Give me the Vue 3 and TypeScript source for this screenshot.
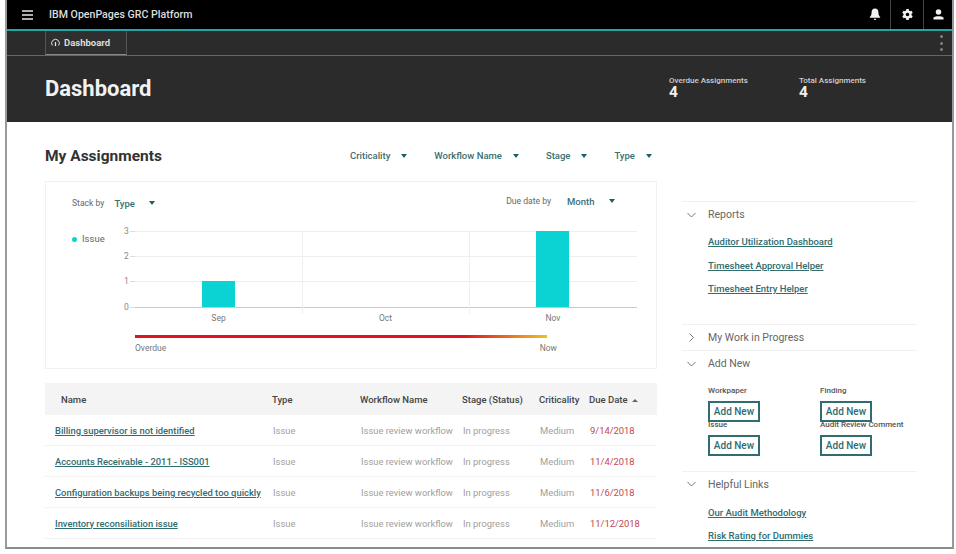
<script setup lang="ts">
interface Row { name: string; date: string }
const rows: Row[] = [
  { name: 'Billing supervisor is not identified', date: '9/14/2018' },
  { name: 'Accounts Receivable - 2011 - ISS001', date: '11/4/2018' },
  { name: 'Configuration backups being recycled too quickly', date: '11/6/2018' },
  { name: 'Inventory reconsiliation issue', date: '11/12/2018' },
]
const filters = ['Criticality', 'Workflow Name', 'Stage', 'Type']
const reports = ['Auditor Utilization Dashboard', 'Timesheet Approval Helper', 'Timesheet Entry Helper']
const addNew = ['Workpaper', 'Finding', 'Issue', 'Audit Review Comment']
const helpful = ['Our Audit Methodology', 'Risk Rating for Dummies']
</script>

<template>
  <div class="frame">
    <div class="screen">
      <header class="topbar">
        <svg class="burger" width="11" height="10" viewBox="0 0 11 10"><path d="M0 1h11M0 5h11M0 9h11" stroke="#e8e8e8" stroke-width="1.300" /></svg>
        <span class="brand">IBM OpenPages GRC Platform</span>
        <div class="actions">
          <div class="act act-bell">
            <svg width="12" height="13" viewBox="0 0 12 13"><path d="M6 0.500C3.800 0.500 2.600 2.200 2.600 4.200c0 2.600-.7 3.600-1.800 4.800v.8h10.400V9c-1.100-1.200-1.800-2.200-1.800-4.800C9.400 2.200 8.200 0.500 6 0.500zM4.700 10.800a1.300 1.300 0 0 0 2.600 0z" fill="#f2f2f2" /></svg>
          </div>
          <div class="act act-gear">
            <svg width="11" height="11" viewBox="0 0 12 12"><path fill-rule="evenodd" d="M4.700 0h2.600l.3 1.700 1.200.7 1.600-.6 1.300 2.300-1.300 1.100v1.600l1.300 1.100-1.300 2.300-1.600-.6-1.200.7L7.300 12H4.700l-.3-1.700-1.200-.7-1.600.6L.3 7.900l1.300-1.100V5.200L.3 4.100l1.300-2.300 1.600.6 1.200-.7zM6 4a2 2 0 1 0 0 4 2 2 0 0 0 0-4z" fill="#f2f2f2" /></svg>
          </div>
          <div class="act act-user">
            <svg width="11" height="11" viewBox="0 0 12 12"><circle cx="6" cy="3.400" r="3" fill="#f2f2f2" /><path d="M0.500 9.300c1-1 3.300-1.500 5.500-1.500s4.500.5 5.500 1.500V11.500H0.500z" fill="#f2f2f2" /></svg>
          </div>
        </div>
      </header>

      <nav class="tabbar">
        <div class="tab">
          <svg width="9" height="9" viewBox="0 0 10 10"><path d="M1.500 8.300A4.300 4.300 0 1 1 8.500 8.300" fill="none" stroke="#e6e6e6" stroke-width="1.100" /><path d="M5 4.500V9" stroke="#e6e6e6" stroke-width="1.400" /></svg>
          <span>Dashboard</span>
        </div>
        <div class="kebab"><i></i><i></i><i></i></div>
      </nav>

      <section class="hero">
        <h1>Dashboard</h1>
        <div class="stats">
          <div class="stat"><span>Overdue Assignments</span><b>4</b></div>
          <div class="stat"><span>Total Assignments</span><b>4</b></div>
        </div>
      </section>

      <main class="content">
        <div class="left">
          <div class="title-row">
            <h2>My Assignments</h2>
            <div class="filters">
              <div v-for="f in filters" :key="f" class="drop">{{ f }}<i class="caret"></i></div>
            </div>
          </div>

          <div class="chart-card">
            <div class="chart-head">
              <div class="by"><span class="by-l">Stack by</span><span class="drop">Type<i class="caret caret-w"></i></span></div>
              <div class="by by-r"><span class="by-l">Due date by</span><span class="drop">Month<i class="caret caret-w"></i></span></div>
            </div>
            <div class="chart-body">
              <div class="legend"><i class="dot"></i>Issue</div>
              <div class="plot-wrap">
                <div class="plot">
                  <div class="yrow"><span>3</span></div>
                  <div class="yrow"><span>2</span></div>
                  <div class="yrow tall"><span>1</span></div>
                  <div class="yrow last"><span>0</span></div>
                  <div class="vline v1"></div>
                  <div class="vline v2"></div>
                  <div class="bar b1"></div>
                  <div class="bar b2"></div>
                </div>
                <div class="xlabels"><span>Sep</span><span>Oct</span><span>Nov</span></div>
                <div class="timeline"></div>
                <div class="tl-labels"><span>Overdue</span><span>Now</span></div>
              </div>
            </div>
          </div>

          <div class="table">
            <div class="tr th">
              <div class="c-name th-name">Name</div>
              <div class="c-type">Type</div>
              <div class="c-wf">Workflow Name</div>
              <div class="c-stage">Stage (Status)</div>
              <div class="c-crit">Criticality</div>
              <div class="c-date">Due Date <i class="sort"></i></div>
            </div>
            <div v-for="r in rows" :key="r.name" class="tr td">
              <div class="c-name"><a>{{ r.name }}</a></div>
              <div class="c-type">Issue</div>
              <div class="c-wf">Issue review workflow</div>
              <div class="c-stage">In progress</div>
              <div class="c-crit">Medium</div>
              <div class="c-date red">{{ r.date }}</div>
            </div>
          </div>
        </div>

        <aside class="side">
          <div class="acc acc-reports">
            <div class="acc-h"><svg class="chev" width="9" height="6" viewBox="0 0 9 6"><path d="M.5 1l4 4 4-4" fill="none" stroke="#777" /></svg>Reports</div>
            <div class="links links-r"><a v-for="l in reports" :key="l">{{ l }}</a></div>
          </div>
          <div class="acc acc-wip">
            <div class="acc-h"><svg class="chev" width="9" height="9" viewBox="0 0 9 9"><path d="M2.500.5l4 4-4 4" fill="none" stroke="#777" /></svg>My Work in Progress</div>
          </div>
          <div class="acc acc-add">
            <div class="acc-h"><svg class="chev" width="9" height="6" viewBox="0 0 9 6"><path d="M.5 1l4 4 4-4" fill="none" stroke="#777" /></svg>Add New</div>
            <div class="add-grid">
              <div v-for="a in addNew" :key="a" class="add-item">
                <span>{{ a }}</span>
                <button type="button">Add New</button>
              </div>
            </div>
          </div>
          <div class="acc acc-help">
            <div class="acc-h"><svg class="chev" width="9" height="6" viewBox="0 0 9 6"><path d="M.5 1l4 4 4-4" fill="none" stroke="#777" /></svg>Helpful Links</div>
            <div class="links links-h"><a v-for="l in helpful" :key="l">{{ l }}</a></div>
          </div>
        </aside>
      </main>
    </div>
  </div>
</template>

<style>
html, body { margin: 0; background: #fff; overflow: hidden; }
</style>

<style scoped>
.frame { width: 956px; height: 554px; box-sizing: border-box; padding: 0 2px 5px 5px; background: #fff; font-family: Roboto, "Noto Sans", sans-serif; }
.screen { width: 949px; height: 549px; overflow: hidden; border-left: 2px solid #999; border-right: 2px solid #999; border-bottom: 2px solid #8c8c8c; box-sizing: border-box; background: #fff; }

.topbar { height: 29px; background: #000; display: flex; align-items: center; color: #dedede; border-bottom: 2px solid #23a6a6; box-sizing: content-box; }
.burger { margin-left: 15px; }
.brand { margin-left: 16px; font-size: 10.600px; font-weight: 500; white-space: nowrap; }
.actions { margin-left: auto; display: flex; height: 100%; }
.act { display: flex; align-items: center; justify-content: center; }
.act-bell { width: 30px; }
.act-gear { width: 33px; border-left: 1px solid #444; box-sizing: border-box; }
.act-user { width: 29px; border-left: 1px solid #444; box-sizing: border-box; }

.tabbar { height: 25px; box-sizing: border-box; background: #2b2b2b; border-bottom: 1px solid #666; display: flex; }
.tab { margin-left: 38px; width: 82px; box-sizing: border-box; border-left: 1px solid #555; border-right: 1px solid #555; border-bottom: 1px solid #888; background: #2f2f2f; display: flex; align-items: center; gap: 4px; padding-left: 5px; color: #ddd; font-size: 9.500px; font-weight: 700; }
.kebab { margin-left: auto; margin-right: 9px; display: flex; flex-direction: column; justify-content: center; gap: 3.500px; }
.kebab i { width: 3px; height: 3px; border-radius: 50%; background: #808080; }

.hero { height: 66px; background: #2b2b2b; display: flex; align-items: center; color: #f2f2f2; }
.hero h1 { margin: -1px 0 0 38px; font-size: 22px; font-weight: 700; width: 624px; line-height: 30px; }
.stats { display: flex; margin-top: -4px; }
.stat { display: flex; flex-direction: column; width: 130px; }
.stat span { display: block; font-size: 8px; font-weight: 500; color: #cfcfcf; line-height: 10px; white-space: nowrap; }
.stat b { display: block; font-size: 15.500px; line-height: 13px; font-weight: 700; color: #eee; }

.content { display: flex; background: #fff; }
.left { width: 612px; margin-left: 38px; flex: none; }
.title-row { display: flex; align-items: flex-start; height: 59px; padding-top: 25px; box-sizing: border-box; }
h2 { margin: 0; font-size: 15.500px; font-weight: 700; color: #333; width: 305px; line-height: 18px; white-space: nowrap; }
.filters { display: flex; gap: 27px; line-height: 18px; }
.drop { color: #3b6f70; font-size: 9.500px; font-weight: 500; display: inline-flex; align-items: center; white-space: nowrap; }
.caret { display: inline-block; margin-left: 11px; border-left: 3.500px solid transparent; border-right: 3.500px solid transparent; border-top: 4px solid #1f5f66; }
.caret-w { margin-left: 14.500px; }

.chart-card { height: 188px; border: 1px solid #f1f1f1; box-sizing: border-box; }
.chart-head { display: flex; justify-content: space-between; padding: 14px 41px 0 26px; height: 35px; box-sizing: content-box; }
.by { display: flex; align-items: center; gap: 10px; height: 14px; }
.by-r { margin-top: -2px; gap: 16px; }
.by-l { font-size: 8.600px; color: #666; white-space: nowrap; }
.chart-body { display: flex; }
.legend { width: 63px; margin-left: 26px; margin-top: 2px; font-size: 9.500px; color: #666; display: flex; align-items: flex-start; gap: 5px; line-height: 12px; height: 12px; }
.dot { width: 5px; height: 5px; border-radius: 50%; background: #0fd0d0; margin-top: 4px; flex: none; }
.plot-wrap { width: 502px; flex: none; }
.plot { position: relative; height: 77px; }
.yrow { height: 25px; border-top: 1px solid #efefef; box-sizing: border-box; position: relative; }
.yrow::before { content: ""; position: absolute; left: -5px; top: -1px; width: 5px; height: 1px; background: #dcdcdc; }
.yrow.tall { height: 26px; }
.yrow span { position: absolute; left: -11px; top: -6px; font-size: 8.500px; color: #888; line-height: 11px; }
.yrow.last { height: 1px; border-top: 1px solid #c8c8c8; }
.vline { position: absolute; top: 0; height: 83px; width: 1px; background: #f0f0f0; }
.v1 { left: 167px; }
.v2 { left: 334px; }
.bar { position: absolute; background: #0bd3d3; width: 33px; bottom: 1px; }
.b1 { left: 67px; height: 26px; }
.b2 { left: 401px; height: 76px; }
.xlabels { display: grid; grid-template-columns: 167px 167px 168px; height: 20px; align-items: center; text-align: center; font-size: 8.500px; color: #777; }
.timeline { height: 3px; width: 412px; background: linear-gradient(90deg, #e0141f 0, #e0141f 80%, #eec21f 100%); margin-top: 7px; }
.tl-labels { width: 422px; display: flex; justify-content: space-between; font-size: 8.500px; color: #777; margin-top: 5px; line-height: 11px; }

.table { margin-top: 14px; width: 612px; }
.tr { display: flex; align-items: center; font-size: 9.400px; }
.th { height: 32px; background: #f4f4f4; color: #444; font-weight: 500; font-size: 9.500px; }
.td { height: 31px; border-bottom: 1px solid #f2f2f2; box-sizing: border-box; color: #a0a0a0; }
.c-name { width: 227px; padding-left: 10px; box-sizing: border-box; white-space: nowrap; }
.th-name { padding-left: 16px; }
.c-type { width: 88px; }
.td .c-type { padding-left: 1px; width: 87px; }
.c-wf { width: 102px; white-space: nowrap; }
.td .c-wf { padding-left: 1px; width: 101px; }
.c-stage { width: 77px; white-space: nowrap; }
.td .c-stage { padding-left: 1px; width: 76px; }
.c-crit { width: 50px; white-space: nowrap; }
.td .c-crit { padding-left: 1px; width: 49px; }
.c-date { flex: 1; white-space: nowrap; }
.td .c-date { padding-left: 1px; }
.red { color: #c2474f; }
.sort { display: inline-block; border-left: 3px solid transparent; border-right: 3px solid transparent; border-bottom: 3px solid #666; margin-left: 2px; vertical-align: 1px; }
a { color: #2f6d70; font-weight: 500; text-decoration: underline; }
.td a { font-size: 9.400px; }

.side { width: 235px; margin-left: 25px; flex: none; }
.acc { border-top: 1px solid #f1f1f1; box-sizing: border-box; }
.acc-reports { margin-top: 79px; height: 123px; }
.acc-wip { height: 26px; }
.acc-add { height: 121px; }
.acc-h { display: flex; align-items: center; height: 25px; font-size: 10.500px; color: #666; padding-left: 5px; }
.acc-wip .acc-h, .acc-help .acc-h { height: 24px; }
.chev { width: 9px; margin-right: 12px; flex: none; }
.links { display: flex; flex-direction: column; padding-left: 26px; font-size: 9.500px; gap: 11.500px; align-items: flex-start; }
.links a { line-height: 12px; white-space: nowrap; }
.links-r { margin-top: 9px; }
.links-h { margin-top: 11px; gap: 11px; }
.add-grid { display: grid; grid-template-columns: 112px 112px; padding-left: 26px; margin-top: 10px; }
.add-item { display: flex; flex-direction: column; align-items: flex-start; height: 34px; }
.add-item span { font-size: 8px; line-height: 10px; color: #555; font-weight: 500; white-space: nowrap; }
button { margin-top: 5px; width: 52px; height: 21px; flex: none; box-sizing: border-box; background: #fff; border: 2px solid #2f6d70; color: #2f6d70; font: 500 10px Roboto, sans-serif; padding: 0; }
</style>
